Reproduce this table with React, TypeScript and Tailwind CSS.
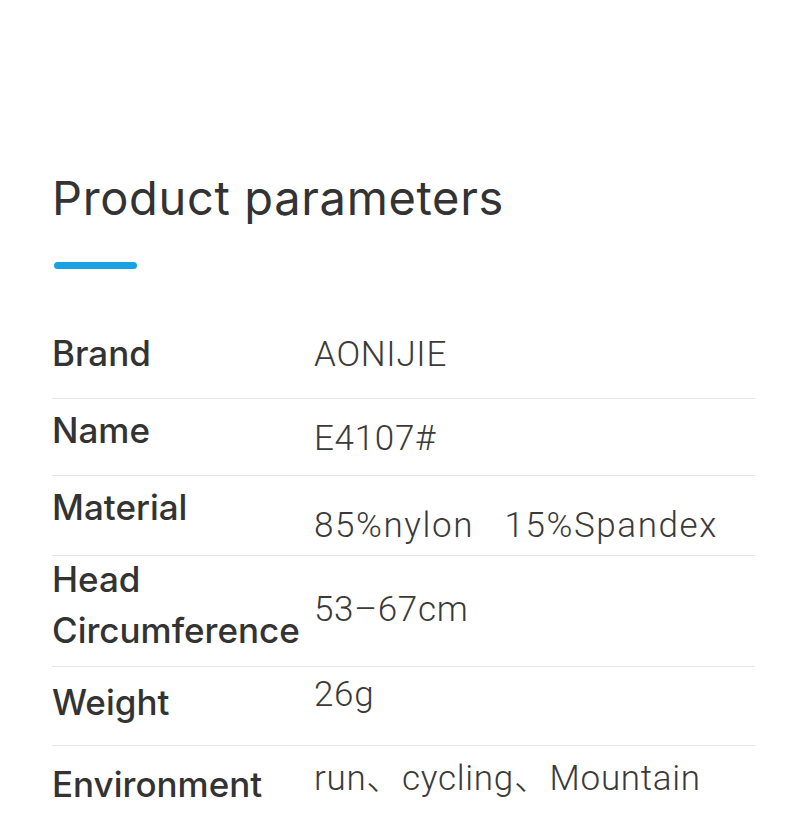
import React from "react";

const labelCls = "font-['Inter','Noto_Sans_CJK_SC',sans-serif] font-medium text-[35px] leading-none text-[#333333]";
const valueCls = "font-['Roboto','Noto_Sans_CJK_SC',sans-serif] font-light text-[35px] leading-none text-[#3a3a3a] whitespace-pre tracking-[0.7px]";

export default function App() {
  return (
    <div className="w-[790px] h-[835px] bg-white overflow-hidden">
      <div className="pl-[52px] pr-[35px]">
        <div className="pt-[174px] h-[262px]">
          <h1 className="font-['Inter',sans-serif] font-normal text-[47px] leading-none tracking-[0.65px] text-[#333333]">
            Product parameters
          </h1>
        </div>
        <div className="ml-[2px] w-[83px] h-[7px] rounded-full bg-[#1ba1e2]" />
        <div className="mt-[51px]">
          <div className="flex h-[79px] border-b border-[#e6e6e6]">
            <div className={`w-[262px] shrink-0 pt-[16px] ${labelCls}`}>Brand</div>
            <div className={`pt-[17px] ${valueCls}`}>AONIJIE</div>
          </div>
          <div className="flex h-[77px] border-b border-[#e6e6e6]">
            <div className={`w-[262px] shrink-0 pt-[14px] ${labelCls}`}>Name</div>
            <div className={`pt-[22px] ${valueCls}`}>E4107#</div>
          </div>
          <div className="flex h-[80px] border-b border-[#e6e6e6]">
            <div className={`w-[262px] shrink-0 pt-[14px] ${labelCls}`}>Material</div>
            <div className={`pt-[32px] ${valueCls} !tracking-[1.6px]`}>{"85%nylon   15%Spandex"}</div>
          </div>
          <div className="flex h-[111px] border-b border-[#e6e6e6]">
            <div className="w-[262px] shrink-0 -mt-[2px] font-['Inter',sans-serif] font-medium text-[35px] leading-[51px] text-[#333333]">
              <div>Head</div>
              <div>Circumference</div>
            </div>
            <div className={`pt-[36px] ${valueCls}`}>53–67cm</div>
          </div>
          <div className="flex h-[79px] border-b border-[#e6e6e6]">
            <div className={`w-[262px] shrink-0 pt-[18px] ${labelCls}`}>Weight</div>
            <div className={`pt-[10px] ${valueCls}`}>26g</div>
          </div>
          <div className="flex h-[89px]">
            <div className={`w-[262px] shrink-0 pt-[21px] ${labelCls}`}>Environment</div>
            <div className={`pt-[15px] ${valueCls}`}>run、cycling、Mountain</div>
          </div>
        </div>
      </div>
    </div>
  );
}
